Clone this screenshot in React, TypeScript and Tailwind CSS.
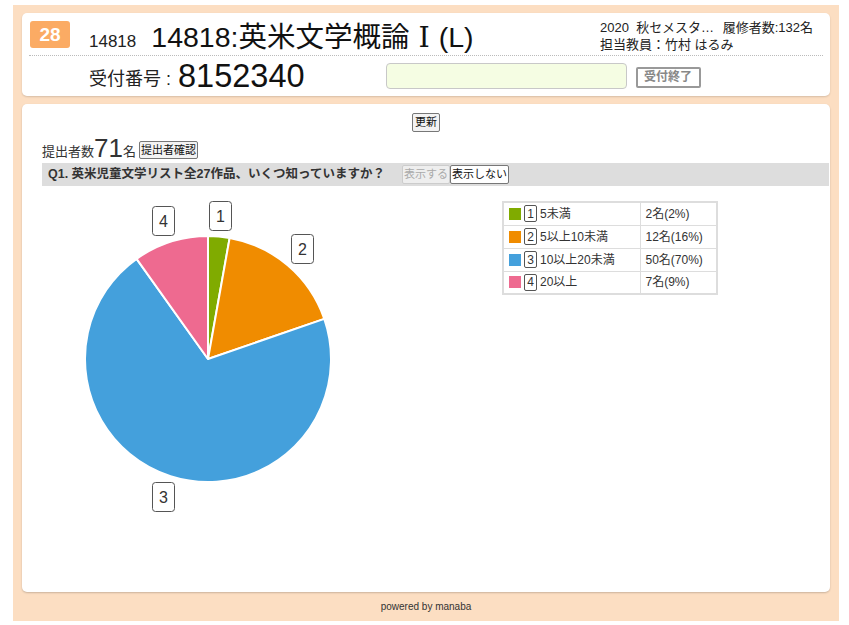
import React from 'react';

const FONT = '"Liberation Sans", "Noto Sans CJK JP", Arial, sans-serif';

type Row = { no: number; label: string; count: string; color: string };

const rows: Row[] = [
  { no: 1, label: '5未満', count: '2名(2%)', color: '#80ab00' },
  { no: 2, label: '5以上10未満', count: '12名(16%)', color: '#f08c00' },
  { no: 3, label: '10以上20未満', count: '50名(70%)', color: '#44a0dc' },
  { no: 4, label: '20以上', count: '7名(9%)', color: '#ee6a90' },
];

const values = [2, 12, 50, 7];

// pie slices, clockwise from the top
const PieChart = () => {
  const cx = 166;
  const cy = 171;
  const r = 123;
  const total = values.reduce((a, b) => a + b, 0);
  let acc = 0;
  const pt = (deg: number) => {
    const a = (deg * Math.PI) / 180;
    return [cx + r * Math.sin(a), cy - r * Math.cos(a)];
  };
  const labels = [
    { t: '1', x: 167, y: 13 },
    { t: '2', x: 249, y: 46 },
    { t: '3', x: 110, y: 294 },
    { t: '4', x: 110, y: 18 },
  ];
  return (
    <svg width="330" height="330" className="block">
      {values.map((v, i) => {
        const start = (acc / total) * 360;
        acc += v;
        const end = (acc / total) * 360;
        const [x1, y1] = pt(start);
        const [x2, y2] = pt(end);
        const large = end - start > 180 ? 1 : 0;
        return (
          <path
            key={i}
            d={`M${cx},${cy} L${x1},${y1} A${r},${r} 0 ${large} 1 ${x2},${y2} Z`}
            fill={rows[i].color}
            stroke="#fff"
            strokeWidth={2}
            strokeLinejoin="round"
          />
        );
      })}
      {labels.map((l) => (
        <g key={l.t}>
          <rect x={l.x + 0.5} y={l.y + 0.5} width={22} height={29} rx={3} fill="#fff" stroke="#555" strokeWidth={1} />
          <text x={l.x + 11.5} y={l.y + 21} textAnchor="middle" fontSize="16" fill="#333" style={{ fontFamily: FONT }}>
            {l.t}
          </text>
        </g>
      ))}
    </svg>
  );
};

const Legend = () => (
  <table className="border-2 border-[#dddddd] border-collapse text-[12px] text-[#333]">
    <tbody>
      {rows.map((r) => (
        <tr key={r.no} className="h-[23px]">
          <td className="border border-[#dddddd] pl-[5px] pr-[1px] w-[137px]">
            <div className="flex items-center">
              <span className="w-[12px] h-[12px] inline-block" style={{ backgroundColor: r.color }} />
              <span className="ml-[3px] w-[13px] h-[17px] border border-[#555] rounded-[2px] flex items-center justify-center leading-none text-[12px]">
                {r.no}
              </span>
              <span className="ml-[3px]">{r.label}</span>
            </div>
          </td>
          <td className="border border-[#dddddd] pl-[5px] w-[77px]">{r.count}</td>
        </tr>
      ))}
    </tbody>
  </table>
);

export default function App() {
  return (
    <div className="min-h-[625px] bg-white pt-[5px] pl-[13px]" style={{ fontFamily: FONT }}>
      <div className="w-[826px] h-[616px] bg-[#fcdec2] pt-[8px] px-[9px] flex flex-col">
        {/* header card */}
        <div className="h-[83px] bg-white rounded-[5px] shadow-[0_1px_2px_rgba(0,0,0,0.15)] px-[7px] pt-[6px]">
          <div className="h-[37px] flex items-start border-b border-dotted border-[#bbbbbb]">
            <div className="mt-[2px] ml-[1px] w-[40px] h-[27px] rounded-[3px] bg-[#fbab64] text-white font-bold text-[19px] leading-[27px] text-center">
              28
            </div>
            <span className="ml-[19px] mt-[13px] text-[17px] leading-[20px] text-[#222]">14818</span>
            <span className="ml-[15px] mt-[1px] text-[28.5px] leading-[34px] text-[#111]">
              14818:英米文学概論<span style={{ fontFamily: '"DejaVu Serif", "Liberation Serif", serif' }} className="mx-[9px]">Ⅰ</span>(L)
            </span>
            <div className="ml-auto mr-[10px] text-[13px] leading-[17px] text-[#222] w-[213px]">
              <div className="flex">
                <span>2020&nbsp;&nbsp;秋セメスタ…</span>
                <span className="ml-auto">履修者数:132名</span>
              </div>
              <div>担当教員：竹村 はるみ</div>
            </div>
          </div>
          <div className="h-[39px] flex items-center">
            <span className="ml-[60px] mt-[8px] text-[18px] text-[#222]">受付番号 :</span>
            <span className="ml-[7px] text-[32.5px] leading-[34px] text-[#111]">8152340</span>
            <div className="ml-[81px] w-[241px] h-[26px] rounded-[4px] border border-[#c8c8c8] bg-[#f5fde3]" />
            <button className="ml-[9px] mt-[3px] w-[65px] h-[21px] border-2 border-[#999] rounded-[2px] bg-white text-[12px] font-bold text-[#888] leading-none">
              受付終了
            </button>
          </div>
        </div>

        {/* question card */}
        <div className="mt-[8px] h-[488px] bg-white rounded-[5px] shadow-[0_1px_2px_rgba(0,0,0,0.2)] pl-[20px] pr-[1px] pt-[9px]">
          <div className="flex justify-center pr-[19px]">
            <button className="h-[19px] px-[2px] border border-[#777] rounded-[2px] bg-[#f3f3f3] text-[11px] leading-none text-[#111]">
              更新
            </button>
          </div>
          <div className="mt-[4px] flex items-end h-[24px] text-[#333]">
            <span className="text-[13px] leading-[16px]">提出者数</span>
            <span className="text-[26px] leading-[26px] -mb-[1px]">71</span>
            <span className="text-[13px] leading-[16px]">名</span>
            <button className="ml-[3px] mb-[1px] h-[18px] px-[1px] border border-[#777] rounded-[2px] bg-[#f3f3f3] text-[11px] leading-none text-[#111]">
              提出者確認
            </button>
          </div>
          <div className="mt-[3px] h-[23px] bg-[#dddddd] flex items-center pl-[6px]">
            <span className="text-[12.5px] font-bold text-[#333]">Q1. 英米児童文学リスト全27作品、いくつ知っていますか？</span>
            <button className="ml-[17px] h-[19px] px-[1px] border border-[#ccc] rounded-[2px] bg-[#eeeeee] text-[11px] leading-none text-[#aaa]">
              表示する
            </button>
            <button className="h-[19px] px-[1px] border border-[#777] rounded-[2px] bg-white text-[11px] leading-none text-[#111]">
              表示しない
            </button>
          </div>
          <div className="mt-[2px] flex items-start">
            <PieChart />
            <div className="ml-[130px] mt-[13px]">
              <Legend />
            </div>
          </div>
        </div>

        <div className="flex-1 flex items-center justify-center text-[10px] text-[#333]">powered by manaba</div>
      </div>
    </div>
  );
}
